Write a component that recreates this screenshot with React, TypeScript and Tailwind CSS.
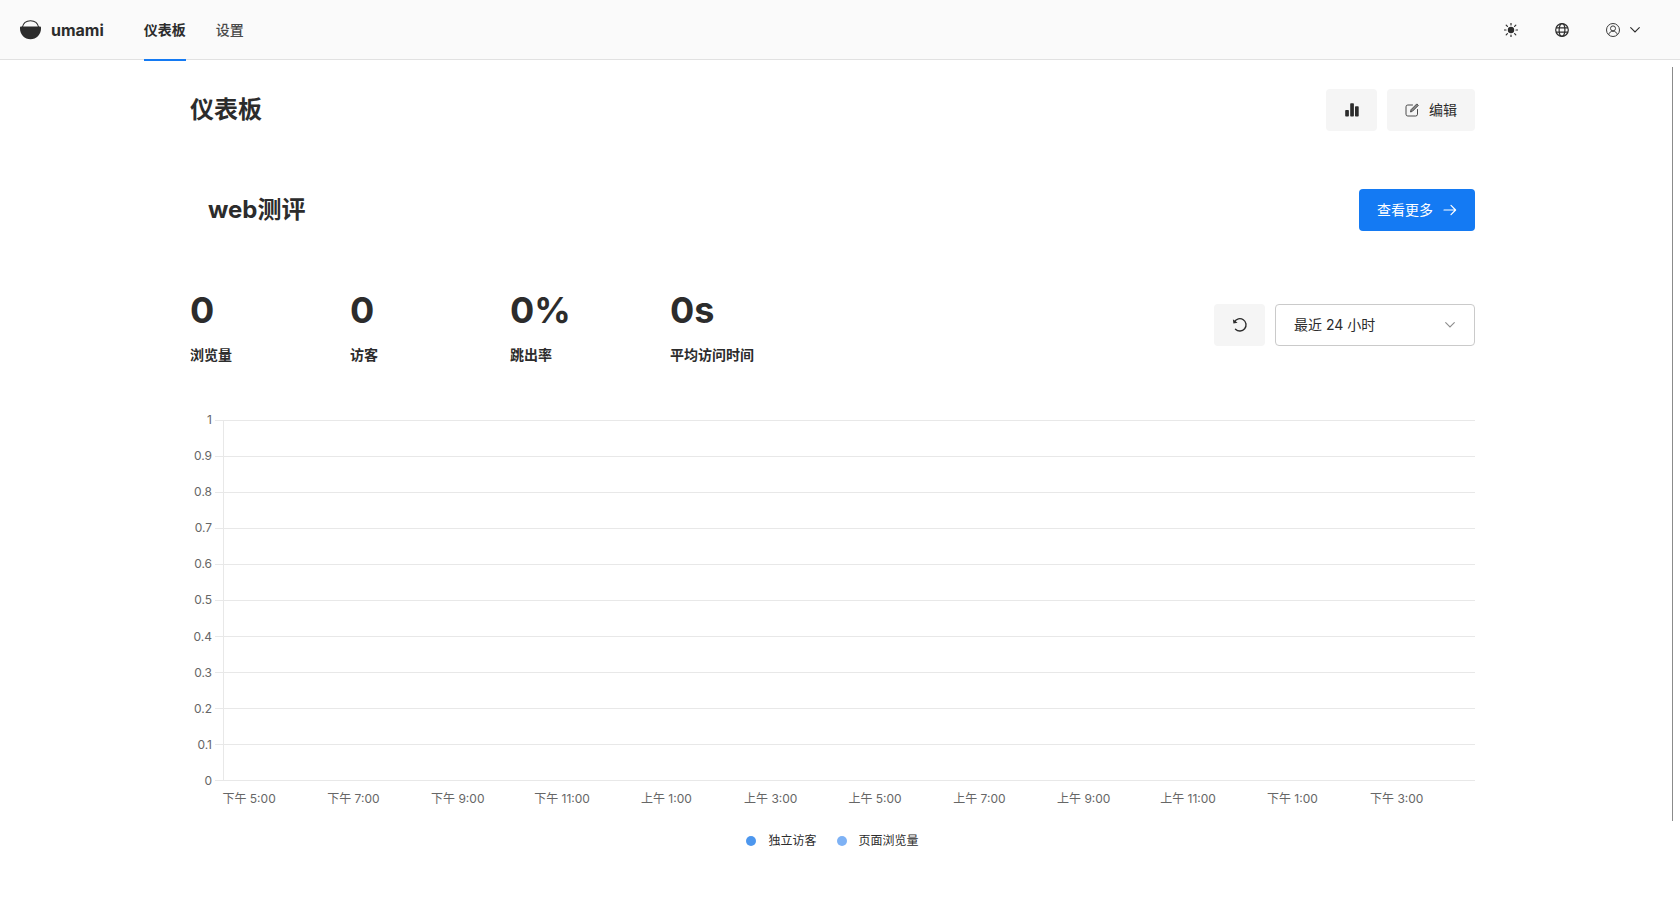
import type { ReactNode } from "react";

type Metric = {
  label: string;
  value: string;
};

const navigation = [
  { name: "仪表板", href: "#dashboard", current: true },
  { name: "设置", href: "#settings", current: false },
];

const metrics: Metric[] = [
  { label: "浏览量", value: "0" },
  { label: "访客", value: "0" },
  { label: "跳出率", value: "0%" },
  { label: "平均访问时间", value: "0s" },
];

const yTicks = ["1", "0.9", "0.8", "0.7", "0.6", "0.5", "0.4", "0.3", "0.2", "0.1", "0"];

const xTicks = [
  "下午 5:00",
  "下午 7:00",
  "下午 9:00",
  "下午 11:00",
  "上午 1:00",
  "上午 3:00",
  "上午 5:00",
  "上午 7:00",
  "上午 9:00",
  "上午 11:00",
  "下午 1:00",
  "下午 3:00",
];

function Logo() {
  return (
    <svg width="21" height="20" viewBox="0 0 21 20" aria-hidden="true">
      <path d="M2.300 7.500C3.200 3.200 6.500 0.800 10.500 0.800s7.300 2.400 8.200 6.700" fill="none" stroke="#2c2c2c" strokeWidth="1.100" />
      <path d="M1 6.400h19a1 1 0 0 1 1 1v1.400c0 5.800-4.700 10.500-10.500 10.500S0 14.600 0 8.800V7.400a1 1 0 0 1 1-1z" fill="#2c2c2c" />
    </svg>
  );
}

function SunIcon() {
  return (
    <svg width="14" height="14" viewBox="0 0 14 14" aria-hidden="true">
      <circle cx="7" cy="7" r="3.200" fill="#2c2c2c" />
      <path
        d="M7 0.200v1.800M7 12v1.800M0.200 7H2M12 7h1.800M2.200 2.200l1.200 1.200M10.600 10.600l1.200 1.200M2.200 11.800l1.200-1.200M10.600 3.400l1.200-1.200"
        stroke="#2c2c2c"
        strokeWidth="1.200"
        strokeLinecap="round"
      />
    </svg>
  );
}

function GlobeIcon() {
  return (
    <svg width="14" height="14" viewBox="0 0 14 14" fill="none" stroke="#2c2c2c" strokeWidth="1.200" aria-hidden="true">
      <circle cx="7" cy="7" r="6.300" />
      <ellipse cx="7" cy="7" rx="2.900" ry="6.300" />
      <path d="M1 4.800h12M1 9.200h12" />
    </svg>
  );
}

function UserIcon() {
  return (
    <svg width="14" height="14" viewBox="0 0 14 14" fill="none" stroke="#3c3c3c" aria-hidden="true">
      <circle cx="7" cy="7" r="6.500" />
      <circle cx="7" cy="5.400" r="2.500" />
      <path d="M2.700 11.800C3.100 9.500 4.800 8.200 7 8.200s3.900 1.300 4.300 3.600" />
    </svg>
  );
}

function ChevronIcon({ color }: { color: string }) {
  return (
    <svg width="10" height="6" viewBox="0 0 10 6" fill="none" stroke={color} strokeWidth="1.100" strokeLinecap="round" aria-hidden="true">
      <path d="M0.700 0.700L5 5l4.300-4.300" />
    </svg>
  );
}

function BarsIcon() {
  return (
    <svg width="14" height="14" viewBox="0 0 14 14" fill="#2c2c2c" aria-hidden="true">
      <rect x="0.200" y="7" width="3.700" height="6.500" rx="0.800" />
      <rect x="5.200" y="0.300" width="3.700" height="13.200" rx="0.800" />
      <rect x="10" y="3.200" width="3.700" height="10.300" rx="0.800" />
    </svg>
  );
}

function EditIcon() {
  return (
    <svg width="14" height="14" viewBox="0 0 14 14" fill="none" stroke="#4a4a4a" strokeLinejoin="round" strokeLinecap="round" aria-hidden="true">
      <path d="M7.500 2H2.800A1.800 1.800 0 0 0 1 3.800v7.400A1.800 1.800 0 0 0 2.800 13h7.900a1.800 1.800 0 0 0 1.800-1.800V6.500" />
      <path d="M5.600 8.600l0.500-2L11.800 0.900l1.500 1.500L7.600 8.100z" fill="#8a8a8a" />
    </svg>
  );
}

function RefreshIcon() {
  return (
    <svg width="16" height="16" viewBox="0 0 16 16" aria-hidden="true">
      <path d="M2.400 4.900A6.200 6.200 0 1 1 3.500 12.300" fill="none" stroke="#2c2c2c" strokeWidth="1.400" strokeLinecap="round" />
      <path d="M0.900 2.200l0.500 4.200 4.200-0.700z" fill="#2c2c2c" />
    </svg>
  );
}

function ArrowIcon() {
  return (
    <svg width="14" height="14" viewBox="0 0 14 14" fill="none" stroke="#fff" strokeWidth="1.200" strokeLinecap="round" strokeLinejoin="round" aria-hidden="true">
      <path d="M1 7h11.500M8 2.400L12.600 7 8 11.600" />
    </svg>
  );
}

function IconButton({ label, children }: { label: string; children: ReactNode }) {
  return (
    <button
      type="button"
      aria-label={label}
      className="flex h-[42px] w-[51px] items-center justify-center rounded bg-[#f5f5f5] hover:bg-gray-200"
    >
      {children}
    </button>
  );
}

function Header() {
  return (
    <header className="flex h-[60px] items-stretch border-b border-[#e1e1e1] bg-[#fafafa] pr-10 pl-5">
      <a href="#home" className="flex items-center gap-2.5 text-base font-bold">
        <Logo />
        <span>umami</span>
      </a>
      <nav className="ml-10 flex gap-[30px]">
        {navigation.map((item) => (
          <a
            key={item.name}
            href={item.href}
            aria-current={item.current ? "page" : undefined}
            className={
              item.current
                ? "-mb-0.5 flex items-center border-b-2 border-[#147af3] font-bold"
                : "-mb-0.5 flex items-center border-b-2 border-transparent font-medium text-[#4a4a4a]"
            }
          >
            {item.name}
          </a>
        ))}
      </nav>
      <div className="ml-auto flex items-center gap-[37px]">
        <button type="button" aria-label="主题">
          <SunIcon />
        </button>
        <button type="button" aria-label="语言">
          <GlobeIcon />
        </button>
        <button type="button" aria-label="账户" className="flex items-center gap-2.5">
          <UserIcon />
          <ChevronIcon color="#2c2c2c" />
        </button>
      </div>
    </header>
  );
}

function Chart() {
  return (
    <div className="mt-[45px] text-xs text-[#666]">
      <div className="relative flex h-[381px] flex-col justify-between">
        {yTicks.map((tick) => (
          <div key={tick} className="flex h-5 items-center gap-[3px]">
            <span className="w-[22px] text-right">{tick}</span>
            <span className="h-px flex-1 bg-[#e8e8e8]" />
          </div>
        ))}
        {/* y axis */}
        <div className="absolute top-2.5 bottom-2.5 left-[33px] w-px bg-[#e8e8e8]" />
      </div>
      <div className="ml-[33px] flex">
        {xTicks.map((tick) => (
          <div key={tick} className="flex-1">
            <div className="flex w-1/2 justify-center whitespace-nowrap leading-4">{tick}</div>
          </div>
        ))}
      </div>
      <div className="mt-[26px] flex justify-center gap-5 leading-4 text-[#2c2c2c]">
        <div className="flex items-center gap-3">
          <span className="size-2.5 rounded-full bg-[#4d97ee]" />
          独立访客
        </div>
        <div className="flex items-center gap-3">
          <span className="size-2.5 rounded-full bg-[#7eb2f5]" />
          页面浏览量
        </div>
      </div>
    </div>
  );
}

export default function App() {
  return (
    <div className="min-h-screen bg-white font-['Inter','Noto_Sans_CJK_SC',sans-serif] text-sm text-[#2c2c2c]">
      <Header />
      <div className="relative">
        <main className="mr-[15px] px-5">
          <div className="mx-auto max-w-[1285px]">
            <div className="flex h-[100px] items-center justify-between">
              <h1 className="text-2xl font-bold">仪表板</h1>
              <div className="flex gap-2.5">
                <IconButton label="图表">
                  <BarsIcon />
                </IconButton>
                <button type="button" className="flex h-[42px] items-center gap-2.5 rounded bg-[#f5f5f5] px-[18px] hover:bg-gray-200">
                  <EditIcon />
                  编辑
                </button>
              </div>
            </div>

            <section className="mt-5">
              <div className="flex h-[60px] items-center justify-between">
                <h2 className="ml-[18px] text-2xl font-bold">web测评</h2>
                <a href="#website" className="flex h-[42px] items-center gap-2.5 rounded bg-[#147af3] px-[18px] text-white hover:bg-blue-600">
                  查看更多
                  <ArrowIcon />
                </a>
              </div>

              <div className="mt-[45px] flex items-center justify-between">
                <div className="flex">
                  {metrics.map((metric) => (
                    <div key={metric.label} className="w-40">
                      <div className="text-4xl leading-[50px] font-bold">{metric.value}</div>
                      <div className="mt-2.5 font-bold whitespace-nowrap">{metric.label}</div>
                    </div>
                  ))}
                </div>
                <div className="flex gap-2.5">
                  <IconButton label="刷新">
                    <RefreshIcon />
                  </IconButton>
                  <div className="relative">
                    <select aria-label="日期范围" className="h-[42px] w-[200px] appearance-none rounded border border-[#cacaca] bg-white px-[18px]">
                      <option>最近 24 小时</option>
                    </select>
                    <span className="pointer-events-none absolute inset-y-0 right-5 flex items-center">
                      <ChevronIcon color="#8e8e8e" />
                    </span>
                  </div>
                </div>
              </div>

              <Chart />
            </section>
          </div>
        </main>
        {/* scroll thumb */}
        <div className="absolute top-[7px] right-[7px] bottom-7 w-px bg-[#8b8b8b]" />
      </div>
    </div>
  );
}
